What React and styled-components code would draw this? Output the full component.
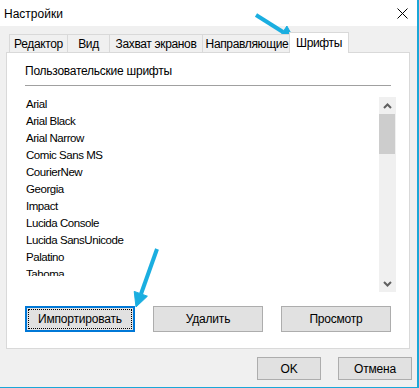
import React from 'react';
import styled, { createGlobalStyle } from 'styled-components';

const GlobalStyle = createGlobalStyle`
  html, body {
    margin: 0;
    padding: 0;
    background: #f0f0f0;
  }
  * {
    box-sizing: border-box;
  }
`;

const Window = styled.div`
  position: relative;
  width: 419px;
  height: 388px;
  background: #f0f0f0;
  border-right: 2px solid #1aa7d8;
  border-bottom: 1px solid #1aa7d8;
  display: flex;
  flex-direction: column;
  font-family: 'Liberation Sans', Arial, sans-serif;
  font-size: 12px;
  color: #000;
`;

const TitleBar = styled.div`
  height: 26px;
  flex: none;
  background: #fff;
  display: flex;
  align-items: center;
  justify-content: space-between;
  padding: 0 9px 0 4px;
`;

const Title = styled.span`
  font-size: 12px;
  line-height: 16px;
  margin-top: 1px;
`;

const Body = styled.div`
  padding: 7px 7px 0 6px;
  display: flex;
  flex-direction: column;
`;

const TabStrip = styled.div`
  height: 20px;
  display: flex;
  align-items: flex-end;
  padding-left: 3px;
  margin-bottom: -1px;
`;

const Tab = styled.div`
  position: relative;
  width: ${(p) => p.$w}px;
  height: ${(p) => (p.$active ? 21 : 18)}px;
  margin-left: ${(p) => (p.$active ? -3 : p.$first ? 0 : -1)}px;
  margin-bottom: ${(p) => (p.$active ? 0 : 1)}px;
  background: ${(p) => (p.$active ? '#fff' : '#f0f0f0')};
  border: 1px solid #d9d9d9;
  border-bottom: none;
  z-index: ${(p) => (p.$active ? 2 : 1)};
  display: flex;
  justify-content: center;
  padding-top: ${(p) => (p.$active ? 3 : 2)}px;
  font-size: 12px;
  line-height: 14px;
  letter-spacing: -0.35px;
  white-space: nowrap;
`;

const Panel = styled.div`
  height: 297px;
  background: #fff;
  border: 1px solid #d9d9d9;
  display: flex;
  flex-direction: column;
  padding: 10px 0 0 18px;
`;

const GroupLabel = styled.div`
  font-size: 12px;
  line-height: 16px;
  letter-spacing: -0.25px;
`;

const Separator = styled.div`
  width: 366px;
  height: 1px;
  margin-top: 6px;
  background: #a0a0a0;
`;

const ListBox = styled.div`
  margin-top: 9px;
  width: 371px;
  display: flex;
`;

const Items = styled.div`
  flex: 1;
  height: 181px;
  overflow: hidden;
  padding: 1px 0 0 1px;
`;

const Item = styled.div`
  height: 17px;
  line-height: 17px;
  font-size: 11.5px;
  letter-spacing: -0.45px;
  white-space: nowrap;
`;

const ScrollBar = styled.div`
  width: 17px;
  height: 195px;
  margin-top: 2px;
  background: #f0f0f0;
  display: flex;
  flex-direction: column;
`;

const ScrollArrow = styled.div`
  height: 17px;
  flex: none;
  display: flex;
  align-items: center;
  justify-content: center;
`;

const ScrollTrack = styled.div`
  flex: 1;
  padding-right: 1px;
`;

const Thumb = styled.div`
  height: 40px;
  background: #cdcdcd;
`;

const ButtonRow = styled.div`
  display: flex;
  gap: 18px;
  margin-top: 14px;
`;

const Button = styled.div`
  position: relative;
  width: ${(p) => p.$w}px;
  height: ${(p) => p.$h}px;
  background: #e1e1e1;
  border: ${(p) => (p.$focused ? '2px solid #0078d7' : '1px solid #adadad')};
  display: flex;
  align-items: center;
  justify-content: center;
  font-size: 12px;
  letter-spacing: -0.2px;
  white-space: nowrap;

  &::after {
    content: '';
    display: ${(p) => (p.$focused ? 'block' : 'none')};
    position: absolute;
    inset: 1px;
    border: 1px dotted #000;
  }
`;

const Footer = styled.div`
  display: flex;
  justify-content: flex-end;
  gap: 17px;
  margin-top: 8px;
  margin-right: -2px;
`;

const Overlay = styled.svg`
  position: absolute;
  left: 0;
  top: 0;
  width: 419px;
  height: 388px;
  pointer-events: none;
`;

const tabs = [
  { label: 'Редактор', w: 59 },
  { label: 'Вид', w: 43 },
  { label: 'Захват экранов', w: 94 },
  { label: 'Направляющие', w: 90 },
  { label: 'Шрифты', w: 60, active: true },
];

const fonts = [
  'Arial',
  'Arial Black',
  'Arial Narrow',
  'Comic Sans MS',
  'CourierNew',
  'Georgia',
  'Impact',
  'Lucida Console',
  'Lucida SansUnicode',
  'Palatino',
  'Tahoma',
];

const Chevron = ({ down }) => (
  <svg width="9" height="6" viewBox="0 0 9 6">
    <polyline
      points={down ? '1,1 4.5,4.5 8,1' : '1,5 4.5,1.5 8,5'}
      fill="none"
      stroke="#606060"
      strokeWidth="2"
    />
  </svg>
);

const Arrow = ({ tail, base, head }) => (
  <g fill="#1aaee0" stroke="#1aaee0">
    <line x1={tail[0]} y1={tail[1]} x2={base[0]} y2={base[1]} strokeWidth="4" />
    <polygon points={head} strokeWidth="1" strokeLinejoin="round" />
  </g>
);

const App = () => {
  return (
    <>
      <GlobalStyle />
      <Window>
        <TitleBar>
          <Title>Настройки</Title>
          <svg width="11" height="11" viewBox="0 0 11 11">
            <path d="M0.5 0.5 L10.5 10.5 M10.5 0.5 L0.5 10.5" stroke="#000" strokeWidth="1" />
          </svg>
        </TitleBar>

        <Body>
          <TabStrip>
            {tabs.map((t, i) => (
              <Tab key={t.label} $w={t.w} $active={t.active} $first={i === 0}>
                {t.label}
              </Tab>
            ))}
          </TabStrip>

          <Panel>
            <GroupLabel>Пользовательские шрифты</GroupLabel>
            <Separator />
            <ListBox>
              <Items>
                {fonts.map((f) => (
                  <Item key={f}>{f}</Item>
                ))}
              </Items>
              <ScrollBar>
                <ScrollArrow>
                  <Chevron />
                </ScrollArrow>
                <ScrollTrack>
                  <Thumb />
                </ScrollTrack>
                <ScrollArrow>
                  <Chevron down />
                </ScrollArrow>
              </ScrollBar>
            </ListBox>
            <ButtonRow>
              <Button $w={110} $h={26} $focused>Импортировать</Button>
              <Button $w={110} $h={26}>Удалить</Button>
              <Button $w={110} $h={26}>Просмотр</Button>
            </ButtonRow>
          </Panel>

          <Footer>
            <Button $w={64} $h={23}>OK</Button>
            <Button $w={74} $h={23}>Отмена</Button>
          </Footer>
        </Body>

        <Overlay viewBox="0 0 419 388">
          <Arrow
            tail={[256, 15]}
            base={[283, 32]}
            head="279.3,37.8 286.9,26 294,39"
          />
          <Arrow
            tail={[157, 249]}
            base={[141, 294]}
            head="134.2,291.4 147.4,296.2 136,307"
          />
        </Overlay>
      </Window>
    </>
  );
};

export default App;
